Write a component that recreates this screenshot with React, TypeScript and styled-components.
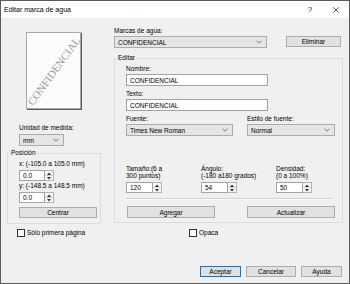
import styled, { createGlobalStyle } from "styled-components"

const GlobalStyle = createGlobalStyle`
  html, body { margin: 0; padding: 0; background: #fff; }
  body {
    font-family: "Liberation Sans", Arial, sans-serif;
    font-size: 6.5px;
    color: #000;
  }
  * { box-sizing: border-box; }
`

const Chevron = () => (
  <svg width="6" height="4" viewBox="0 0 6 4">
    <polyline points="0.5,0.7 3,3.2 5.5,0.7" fill="none" stroke="#5a5a5a" strokeWidth="0.8" />
  </svg>
)

const Arrow = ({ up }: { up?: boolean }) => (
  <svg width="4" height="3" viewBox="0 0 4 3">
    <polygon points={up ? "0,3 2,0.5 4,3" : "0,0 2,2.5 4,0"} fill="#333" />
  </svg>
)

const Combo = ({ value, w }: { value: string; w: number }) => (
  <ComboBox $w={w}>
    <span>{value}</span>
    <Chevron />
  </ComboBox>
)

const SpinBox = ({ value, w }: { value: string; w: number }) => (
  <Spin>
    <NumBox $w={w}>{value}</NumBox>
    <SpinBtns>
      <SpinHalf><Arrow up /></SpinHalf>
      <SpinHalf><Arrow /></SpinHalf>
    </SpinBtns>
  </Spin>
)

const NumField = ({ lines, value }: { lines: string[]; value: string }) => (
  <NumCol>
    <SmallLabel>
      {lines[0]}
      <br />
      {lines[1]}
    </SmallLabel>
    <SpinWrap>
      <SpinBox value={value} w={27} />
    </SpinWrap>
  </NumCol>
)

export default function App() {
  return (
    <>
      <GlobalStyle />
      <Window>
        <TitleBar>
          <TitleText>Editar marca de agua</TitleText>
          <TitleBtn>?</TitleBtn>
          <TitleBtn>
            <svg width="6" height="6" viewBox="0 0 6 6">
              <path d="M0.3 0.3 L5.7 5.7 M5.7 0.3 L0.3 5.7" stroke="#111" strokeWidth="0.7" />
            </svg>
          </TitleBtn>
        </TitleBar>

        <Body>
          <Top>
            <LeftCol>
              <Page>
                <Watermark>CONFIDENCIAL</Watermark>
              </Page>
              <Label $mt={15} $ml={12}>Unidad de medida:</Label>
              <Indent $mt={2} $ml={12}>
                <Combo value="mm" w={45} />
              </Indent>
              <Group $mt={3}>
                <Legend>Posición</Legend>
                <Label>x: (-105.0 a 105.0 mm)</Label>
                <Indent $mt={2}>
                  <SpinBox value="0.0" w={26} />
                </Indent>
                <Label $mt={1}>y: (-148.5 a 148.5 mm)</Label>
                <Indent $mt={2}>
                  <SpinBox value="0.0" w={26} />
                </Indent>
                <Button $w={78} $h={11} $mt={4}>Centrar</Button>
              </Group>
            </LeftCol>

            <RightCol>
              <Label>Marcas de agua:</Label>
              <Row $mt={1}>
                <Combo value="CONFIDENCIAL" w={153} />
                <Button $w={55} $h={11} $ml={19}>Eliminar</Button>
              </Row>
              <Group $mt={6} $pb={4}>
                <Legend>Editar</Legend>
                <Label>Nombre:</Label>
                <TextBox $w={142} $mt={1}>CONFIDENCIAL</TextBox>
                <Label $mt={4}>Texto:</Label>
                <TextBox $w={142} $mt={1}>CONFIDENCIAL</TextBox>
                <Row $mt={4}>
                  <div>
                    <Label>Fuente:</Label>
                    <Indent $mt={1}>
                      <Combo value="Times New Roman" w={107} />
                    </Indent>
                  </div>
                  <Indent $ml={14}>
                    <Label>Estilo de fuente:</Label>
                    <Indent $mt={1}>
                      <Combo value="Normal" w={88} />
                    </Indent>
                  </Indent>
                </Row>
                <Row $mt={29}>
                  <NumField lines={["Tamaño:(6 a", "300 puntos)"]} value="120" />
                  <NumField lines={["Ángulo:", "(-180 a180 grados)"]} value="54" />
                  <NumField lines={["Densidad:", "(0 a 100%)"]} value="50" />
                </Row>
                <Separator />
                <Row $mt={6}>
                  <Button $w={88} $h={12} $ml={1}>Agregar</Button>
                  <Button $w={88} $h={12} $ml={32}>Actualizar</Button>
                </Row>
              </Group>
            </RightCol>
          </Top>

          <CheckRow>
            <CheckItem $w={172}>
              <Box />
              Sólo primera página
            </CheckItem>
            <CheckItem>
              <Box />
              Opaca
            </CheckItem>
          </CheckRow>

          <Footer>
            <Button $w={41} $h={11} $primary>Aceptar</Button>
            <Button $w={50} $h={11}>Cancelar</Button>
            <Button $w={41} $h={11}>Ayuda</Button>
          </Footer>
        </Body>
      </Window>
    </>
  )
}

const Window = styled.div`
  width: 350px;
  height: 284px;
  border: 1px solid #5c5c5c;
  display: flex;
  flex-direction: column;
  background: #f0f0f0;
`

const TitleBar = styled.div`
  height: 17px;
  flex: none;
  background: #fff;
  display: flex;
  align-items: center;
  padding-left: 3px;
`

const TitleText = styled.span`
  flex: 1;
  font-size: 7px;
`

const TitleBtn = styled.div`
  width: 26px;
  height: 17px;
  display: flex;
  align-items: center;
  justify-content: center;
  font-size: 8px;
  color: #111;
`

const Body = styled.div`
  flex: 1;
  display: flex;
  flex-direction: column;
  padding: 9px 6px 6px 6px;
`

const Top = styled.div`
  display: flex;
  gap: 13px;
  align-items: flex-start;
`

const LeftCol = styled.div`
  width: 94px;
  display: flex;
  flex-direction: column;
`

const RightCol = styled.div`
  width: 229px;
  display: flex;
  flex-direction: column;
`

const Page = styled.div`
  margin: 5px 0 0 19px;
  width: 55px;
  height: 77px;
  background: #fcfcfc;
  border: 1px solid #a8a8a8;
  box-shadow: 1px 1px 0 #5e5e5e;
  display: flex;
  align-items: center;
  justify-content: center;
  overflow: hidden;
`

const Watermark = styled.span`
  font-family: "Liberation Serif", "Times New Roman", serif;
  font-size: 11px;
  color: #9a9a9a;
  white-space: nowrap;
  transform: rotate(-54deg);
`

const Label = styled.div<{ $mt?: number; $ml?: number }>`
  line-height: 8px;
  white-space: nowrap;
  margin-top: ${(p) => p.$mt ?? 0}px;
  margin-left: ${(p) => p.$ml ?? 0}px;
`

const SmallLabel = styled.div`
  line-height: 7px;
  white-space: nowrap;
`

const Indent = styled.div<{ $mt?: number; $ml?: number }>`
  margin-top: ${(p) => p.$mt ?? 0}px;
  margin-left: ${(p) => p.$ml ?? 0}px;
`

const Row = styled.div<{ $mt?: number }>`
  display: flex;
  align-items: flex-start;
  margin-top: ${(p) => p.$mt ?? 0}px;
`

const ComboBox = styled.div<{ $w: number }>`
  width: ${(p) => p.$w}px;
  height: 12px;
  background: #e5e5e5;
  border: 1px solid #acacac;
  display: flex;
  align-items: center;
  justify-content: space-between;
  padding: 0 4px 0 3px;
  white-space: nowrap;
`

const TextBox = styled.div<{ $w: number; $mt?: number }>`
  width: ${(p) => p.$w}px;
  height: 12px;
  margin-top: ${(p) => p.$mt ?? 0}px;
  background: #fff;
  border: 1px solid #a3a3a3;
  display: flex;
  align-items: center;
  padding-left: 3px;
`

const Spin = styled.div`
  display: flex;
  height: 11px;
`

const NumBox = styled.div<{ $w: number }>`
  width: ${(p) => p.$w}px;
  height: 11px;
  background: #fff;
  border: 1px solid #a3a3a3;
  display: flex;
  align-items: center;
  padding-left: 3px;
`

const SpinBtns = styled.div`
  width: 9px;
  height: 11px;
  display: flex;
  flex-direction: column;
  border: 1px solid #b4b4b4;
  border-left: none;
  background: #f7f7f7;
`

const SpinHalf = styled.div`
  flex: 1;
  display: flex;
  align-items: center;
  justify-content: center;
  & + & {
    border-top: 1px solid #d4d4d4;
  }
`

const NumCol = styled.div`
  width: 75px;
  display: flex;
  flex-direction: column;
`

const SpinWrap = styled.div`
  margin-top: 3px;
`

const Separator = styled.div`
  margin-top: 5px;
  width: 207px;
  height: 2px;
  border-top: 1px solid #d2d2d2;
  border-bottom: 1px solid #fafafa;
`

const Group = styled.fieldset<{ $mt?: number; $pb?: number }>`
  margin: ${(p) => p.$mt ?? 0}px 0 0 0;
  min-width: 0;
  border: 1px solid #dcdcdc;
  padding: 3px 11px ${(p) => p.$pb ?? 5}px 11px;
  display: flex;
  flex-direction: column;
  align-items: flex-start;
`

const Legend = styled.legend`
  line-height: 8px;
  padding: 0 1px;
  margin-left: -9px;
`

const Button = styled.button<{ $w: number; $h: number; $mt?: number; $ml?: number; $primary?: boolean }>`
  width: ${(p) => p.$w}px;
  height: ${(p) => p.$h}px;
  margin-top: ${(p) => p.$mt ?? 0}px;
  margin-left: ${(p) => p.$ml ?? 0}px;
  padding: 0;
  font: inherit;
  color: #000;
  background: #e1e1e1;
  border: 1px solid ${(p) => (p.$primary ? "#0078d7" : "#adadad")};
  display: flex;
  align-items: center;
  justify-content: center;
`

const CheckRow = styled.div`
  display: flex;
  margin-top: 5px;
  padding-left: 10px;
`

const CheckItem = styled.div<{ $w?: number }>`
  width: ${(p) => (p.$w ? `${p.$w}px` : "auto")};
  display: flex;
  align-items: center;
  gap: 2px;
  line-height: 8px;
`

const Box = styled.span`
  width: 8px;
  height: 8px;
  background: #fff;
  border: 1px solid #333;
`

const Footer = styled.div`
  margin-top: auto;
  display: flex;
  justify-content: flex-end;
  gap: 5px;
  padding-right: 1px;
`
